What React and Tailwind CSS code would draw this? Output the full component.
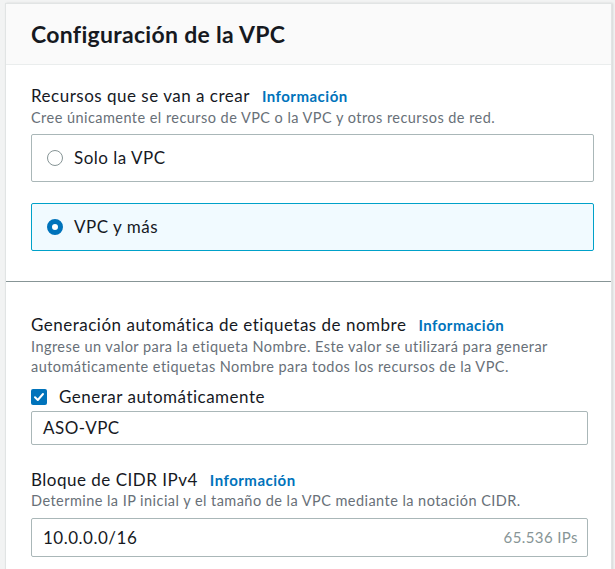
export default function App() {
  const font = { fontFamily: 'Lato, "Noto Sans", sans-serif' };
  const label = "text-[17px] tracking-[0.5px] text-[#16191f]";
  const info = "text-[15px] tracking-[0.5px] font-bold text-[#0073bb]";
  const desc = "text-[14.5px] tracking-[0.45px] leading-[20px] text-[#687078]";
  return (
    <div className="min-h-screen bg-[#f2f3f3] pt-[3px] pl-[5px] pr-[3px]" style={font}>
      <div className="bg-white border border-[#e1e4e4] shadow-[1px_0_2px_rgba(0,0,0,0.12)] min-h-[570px]">
        <div className="h-[61px] bg-[#fafafa] border-b border-[#eaeded] px-[25px] flex items-center">
          <h2 className="text-[23px] tracking-[0.3px] font-bold text-[#16191f] leading-none">Configuración de la VPC</h2>
        </div>
        <div className="pl-[25px] pr-[17px] pt-[20px] pb-[30px] border-b border-[#879596]">
          <div className="flex items-baseline gap-[12px] h-[22px] leading-[22px]">
            <span className={label}>Recursos que se van a crear</span>
            <span className={info}>Información</span>
          </div>
          <p className={desc + " mt-[1px]"}>
            Cree únicamente el recurso de VPC o la VPC y otros recursos de red.
          </p>
          <div className="mt-[6px] h-[48px] border border-[#aab7b8] rounded-[2px] flex items-center px-[15px] gap-[11px]">
            <span className="w-[16px] h-[16px] rounded-full border-[1.5px] border-[#879596] bg-white" />
            <span className={label}>Solo la VPC</span>
          </div>
          <div className="mt-[21px] h-[48px] border border-[#00a1c9] bg-[#f1faff] rounded-[2px] flex items-center px-[15px] gap-[11px]">
            <span className="w-[16px] h-[16px] rounded-full border-[5px] border-[#0073bb] bg-white" />
            <span className={label}>VPC y más</span>
          </div>
        </div>
        <div className="pl-[25px] pr-[23px] pt-[32px]">
          <div className="flex items-baseline gap-[12px] h-[22px] leading-[22px]">
            <span className={label}>Generación automática de etiquetas de nombre</span>
            <span className={info}>Información</span>
          </div>
          <p className={desc + " mt-[1px]"}>
            Ingrese un valor para la etiqueta Nombre. Este valor se utilizará para generar automáticamente etiquetas Nombre para todos los recursos de la VPC.
          </p>
          <div className="flex items-center gap-[12px] h-[20px] mt-[10px]">
            <span className="w-[16px] h-[16px] rounded-[2px] bg-[#0073bb] flex items-center justify-center">
              <svg width="12" height="12" viewBox="0 0 12 12" fill="none">
                <path d="M2 6.3 L4.8 9 L10 3" stroke="white" strokeWidth="2" strokeLinecap="round" strokeLinejoin="round" />
              </svg>
            </span>
            <span className={label}>Generar automáticamente</span>
          </div>
          <div className="mt-[4px] h-[34px] border border-[#aab7b8] rounded-[2px] flex items-center px-[11px]">
            <span className={label}>ASO-VPC</span>
          </div>
          <div className="flex items-baseline gap-[12px] h-[22px] leading-[22px] mt-[24px]">
            <span className={label}>Bloque de CIDR IPv4</span>
            <span className={info}>Información</span>
          </div>
          <p className={desc}>
            Determine la IP inicial y el tamaño de la VPC mediante la notación CIDR.
          </p>
          <div className="mt-[7px] h-[39px] border border-[#aab7b8] rounded-[2px] flex items-center justify-between pl-[11px] pr-[9px]">
            <span className={label}>10.0.0.0/16</span>
            <span className="text-[15px] tracking-[0.4px] text-[#879596]">65.536 IPs</span>
          </div>
        </div>
      </div>
    </div>
  );
}
